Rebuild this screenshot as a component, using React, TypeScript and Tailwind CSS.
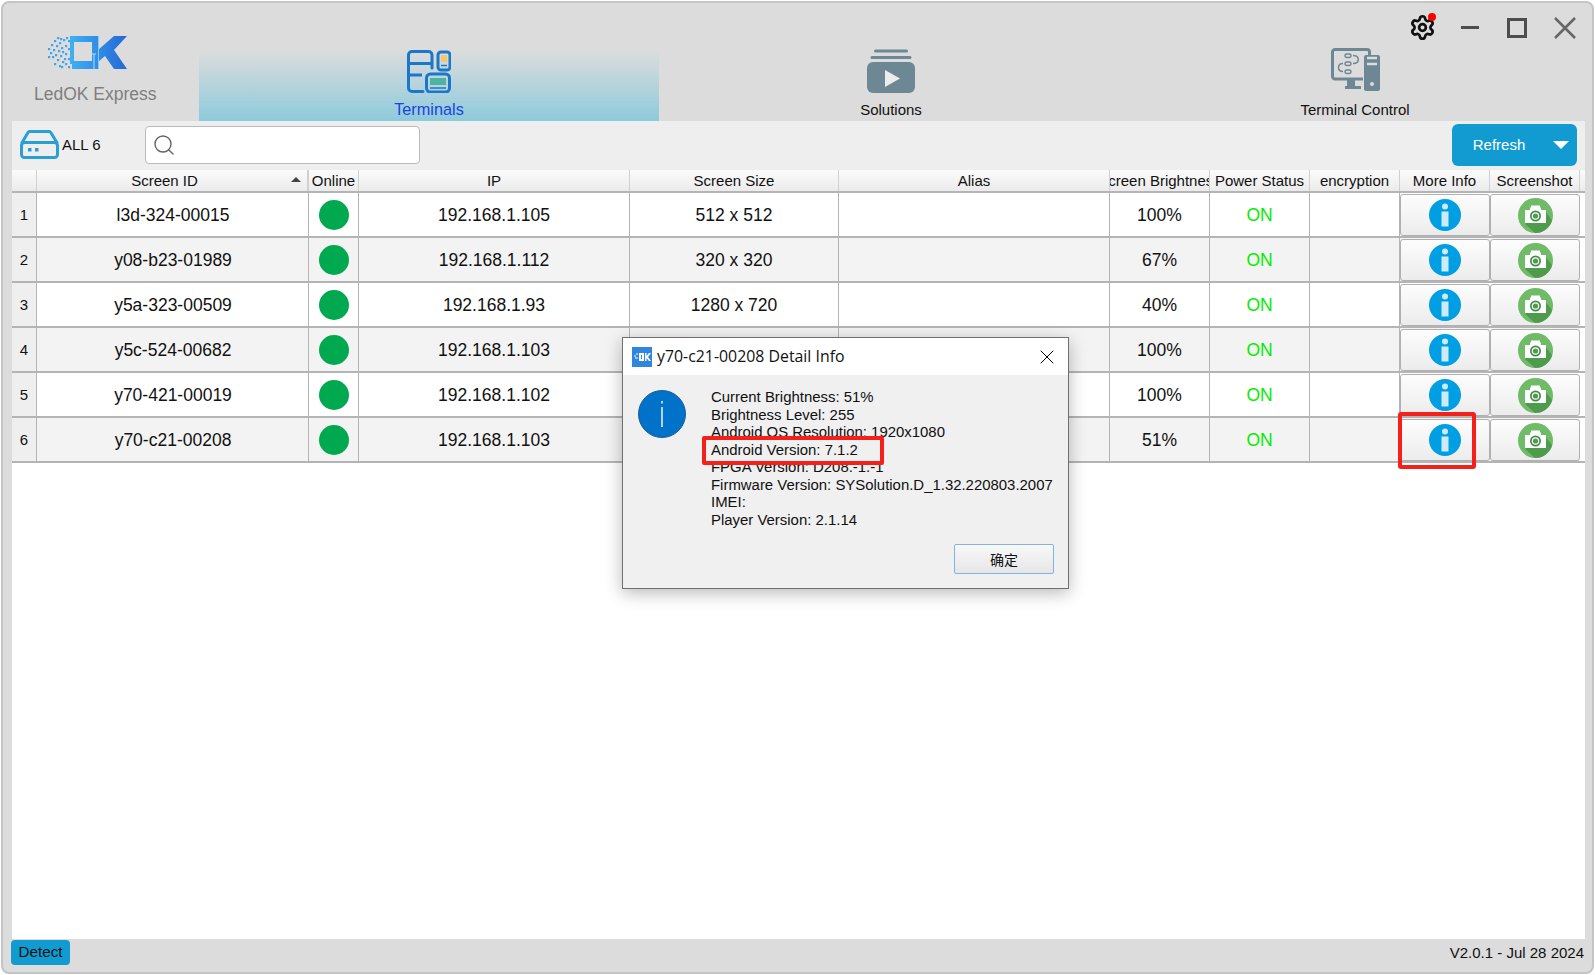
import { Search, Settings, X } from "lucide-react";

const rows = [
  { id: "l3d-324-00015", ip: "192.168.1.105", size: "512 x 512", brightness: "100%" },
  { id: "y08-b23-01989", ip: "192.168.1.112", size: "320 x 320", brightness: "67%" },
  { id: "y5a-323-00509", ip: "192.168.1.93", size: "1280 x 720", brightness: "40%" },
  { id: "y5c-524-00682", ip: "192.168.1.103", size: "", brightness: "100%" },
  { id: "y70-421-00019", ip: "192.168.1.102", size: "", brightness: "100%" },
  { id: "y70-c21-00208", ip: "192.168.1.103", size: "", brightness: "51%" },
];

const details = [
  "Current Brightness: 51%",
  "Brightness Level: 255",
  "Android OS Resolution: 1920x1080",
  "Android Version: 7.1.2",
  "FPGA Version: D208.-1.-1",
  "Firmware Version: SYSolution.D_1.32.220803.2007",
  "IMEI:",
  "Player Version: 2.1.14",
];

const headers = ["Online", "IP", "Screen Size", "Alias", "Screen Brightness", "Power Status", "encryption", "More Info", "Screenshot"];

const gridCols = "grid grid-cols-[25px_272px_50px_271px_209px_271px_100px_100px_90px_90px_90px_1fr]";

function Logo() {
  const bits = [
    [0, 12], [3, 8], [6, 4], [9, 1], [2, 16], [5, 13], [8, 9], [11, 6], [4, 20], [7, 18], [10, 14], [13, 11],
    [6, 27], [9, 23], [12, 19], [14, 25], [11, 29], [15, 3], [14, 15], [0, 20], [17, 9], [17, 17], [17, 27], [13, 30],
    [20, 4], [20, 12], [20, 22], [20, 30], [16, 22], [12, 2], [18, 1],
  ];
  return (
    <svg width="80" height="34" viewBox="0 0 80 34">
      <defs>
        <linearGradient id="logoBlue" x1="0" x2="1" y1="0" y2="0">
          <stop offset="0" stopColor="#3fb0f4" />
          <stop offset="1" stopColor="#2468d6" />
        </linearGradient>
      </defs>
      {bits.map(([x, y]) => (
        <rect key={`${x}-${y}`} x={x} y={y} width="2.2" height="2.2" fill="#3ca6ee" />
      ))}
      <path
        fill="url(#logoBlue)"
        fillRule="evenodd"
        d="M22 0H50V14L66 0H79L66 14L79 33H66L57 20L50 26V33H24V28H22ZM26 6V25H44V6Z"
      />
      <rect x="50" y="0" width="1" height="33" fill="#8cc8f5" />
      <path d="M43 18H48M46 18V33" stroke="#b5dcf8" strokeWidth="1" fill="none" />
    </svg>
  );
}

function TerminalsIcon() {
  return (
    <svg width="44" height="43" viewBox="0 0 44 43" fill="none" stroke="#1a77c9" strokeWidth="3">
      <path d="M25 18V5a3.500 3.500 0 0 0-3.500-3.500H5A3.500 3.500 0 0 0 1.500 5v33A3.500 3.500 0 0 0 5 41.500h11" strokeLinecap="round" />
      <path d="M2 13.500h23M2 25h13" />
      <rect x="31" y="2" width="12" height="18" rx="3" />
      <rect x="34" y="5" width="6" height="7" fill="#f9c76b" stroke="none" />
      <path d="M34 15.500h6" strokeWidth="1.500" />
      <rect x="19.500" y="24" width="23" height="18" rx="4" />
      <rect x="23" y="28" width="16" height="7" fill="#4fb3a3" stroke="none" />
      <path d="M23 38h16" strokeWidth="1.500" />
    </svg>
  );
}

function SolutionsIcon() {
  return (
    <svg width="48" height="44" viewBox="0 0 48 44" className="-mt-px mb-px">
      <path d="M8.500 2H39.500M5 8.500H43" stroke="#6e8794" strokeWidth="3" strokeLinecap="round" />
      <rect x="0" y="13" width="48" height="31" rx="6" fill="#6e8794" />
      <path d="M18 21L33 29.500L18 38Z" fill="#ececec" />
    </svg>
  );
}

function ControlIcon() {
  return (
    <svg width="49" height="43" viewBox="0 0 49 43" fill="none" className="-mt-[2px] mb-[2px]">
      <path d="M32 31H4a2.500 2.500 0 0 1-2.500-2.500V4A2.500 2.500 0 0 1 4 1.500h32A2.500 2.500 0 0 1 38.500 4v3" stroke="#6e8794" strokeWidth="3" />
      <path d="M16 32h8v6h6v3H14v-3h2Z" fill="#6e8794" />
      <rect x="33" y="7" width="16" height="36" rx="2" fill="#6e8794" />
      <path d="M36 10h10M36 16h10" stroke="#dcdcdc" strokeWidth="2.500" />
      <circle cx="41" cy="36" r="2" fill="#dcdcdc" />
      <g stroke="#6e8794" strokeWidth="1.500">
        <rect x="14" y="6" width="6" height="3.500" rx="1.700" />
        <rect x="14" y="14" width="6" height="3.500" rx="1.700" />
        <rect x="14" y="22" width="6" height="3.500" rx="1.700" />
        <path d="M22 7.500c7 0 7 8 0 8M12 15.500c-6 0-6 8 0 8" />
      </g>
    </svg>
  );
}

function DriveIcon() {
  return (
    <svg width="39" height="29" viewBox="0 0 39 29" fill="none" stroke="#2a9fd6" strokeWidth="3">
      <path d="M1.500 13.500L8 2.500a2 2 0 0 1 1.800-1H29a2 2 0 0 1 1.800 1l6.700 11" />
      <rect x="1.500" y="12.500" width="36" height="15" rx="3" />
      <rect x="8" y="18" width="3.500" height="3.500" fill="#2a9fd6" stroke="none" />
      <rect x="15" y="18" width="3.500" height="3.500" fill="#2a9fd6" stroke="none" />
    </svg>
  );
}

function InfoIcon() {
  return (
    <svg width="32" height="32" viewBox="0 0 32 32">
      <circle cx="16" cy="16" r="16" fill="#009fe3" />
      <circle cx="16" cy="7.500" r="3" fill="#cdeaf8" />
      <rect x="12.500" y="12.500" width="7" height="15" fill="#cdeaf8" />
    </svg>
  );
}

function CameraIcon() {
  return (
    <svg width="35" height="35" viewBox="0 0 35 35">
      <circle cx="17.500" cy="17.500" r="17.500" fill="#6fbb68" />
      <path d="M7 26L26 12L34 22A17.500 17.500 0 0 1 17 35Z" fill="#4f9b4d" />
      <path d="M7 12H12V9.500H23V12H28V25H7Z" fill="#ffffff" />
      <rect x="13" y="7.500" width="9" height="2.500" fill="#ffffff" />
      <circle cx="17.500" cy="18" r="5.500" fill="#3f8c45" />
      <circle cx="17.500" cy="18" r="3.800" fill="#ffffff" />
      <circle cx="17.500" cy="18" r="2.600" fill="#4f9b4d" />
    </svg>
  );
}

function DetailDialog() {
  return (
    <div className="absolute left-[622px] top-[337px] w-[447px] h-[252px] border border-[#707070] bg-[#f0f0f0] shadow-[0_4px_16px_rgba(0,0,0,0.28)]">
      <div className="h-[37px] bg-white flex items-center pl-[9px] pr-[9px]">
        <svg width="20" height="20" viewBox="0 0 20 20">
          <rect width="20" height="20" fill="#2f86e0" />
          <path d="M7 6h5v8H7ZM9 8v4h1V8ZM13 6h1.500v3L17 6h2l-3 4 3 4h-2l-2.500-3v3H13Z" fill="#ffffff" fillRule="evenodd" />
          <path d="M2 9h2M3 11h3M4 7h2" stroke="#ffffff" strokeWidth="1" />
        </svg>
        <span className="ml-[5px] text-[15.86px] text-[#111] [font-family:'Open_Sans','Noto_Sans',sans-serif]">y70-c21-00208 Detail Info</span>
        <X size={24} strokeWidth={1} className="ml-auto text-black" />
      </div>
      <div className="flex pt-[13px]">
        <div className="w-[88px] pl-[15px] pt-[2px] shrink-0">
          <svg width="48" height="48" viewBox="0 0 48 48">
            <circle cx="24" cy="24" r="23.500" fill="#0072c9" stroke="#1c5f98" strokeWidth="1" />
            <rect x="23.300" y="11" width="1.400" height="2.500" fill="#ffffff" />
            <rect x="23.300" y="17" width="1.400" height="20" fill="#ffffff" />
          </svg>
        </div>
        <div className="text-[14.93px] leading-[17.500px] text-[#111]">
          {details.map((line) =>
            line.startsWith("Android Version") ? (
              <div key={line} className="relative">
                <span className="absolute -left-[9px] -top-[5px] w-[182px] h-[29px] border-4 border-[#f5201a] rounded-[2px] bg-[#f0f0f0]" />
                <span className="relative">{line}</span>
              </div>
            ) : (
              <div key={line}>{line}</div>
            ),
          )}
        </div>
      </div>
      <div className="flex justify-end mt-[16px] pr-[14px]">
        <button className="w-[100px] h-[30px] border border-[#7eb4ea] rounded-[2px] bg-gradient-to-b from-[#f8f8f8] to-[#e6e6e6] text-[14px] text-[#111] [font-family:'Noto_Sans_CJK_SC',sans-serif]">
          确定
        </button>
      </div>
    </div>
  );
}

export default function App() {
  return (
    <div className="relative w-[1595px] h-[975px] p-px bg-white overflow-hidden [font-family:'Liberation_Sans',Arial,sans-serif]">
      <div className="w-full h-full flex flex-col bg-[#dcdcdc] border-2 border-[#c4c4c4] rounded-[8px] overflow-hidden">
        {/* Header */}
        <header className="h-[118px] flex shrink-0">
          <div className="w-[196px] pl-[31px] pt-[33px] shrink-0">
            <div className="ml-[14px]">
              <Logo />
            </div>
            <div className="mt-[14px] text-[17.5px] leading-[20px] text-[#7f7f7f] whitespace-nowrap">LedOK Express</div>
          </div>
          <div className="flex-1 flex flex-col">
            <div className="h-[47px] flex items-start justify-end">
              <div className="relative mt-[11px] mr-[25px]">
                <Settings size={27} strokeWidth={2.4} className="text-[#111]" />
                <span className="absolute right-0 top-[-1px] w-[8px] h-[8px] rounded-full bg-[#ff0000]" />
              </div>
              <span className="mt-[23px] w-[18px] h-[3px] bg-[#4d4d4d] mr-[28px]" />
              <span className="mt-[15px] w-[20px] h-[20px] border-[3px] border-[#4d4d4d] mr-[27px]" />
              <svg width="22" height="22" viewBox="0 0 22 22" className="mt-[14px] mr-[16px]">
                <path d="M1 1L21 21M21 1L1 21" stroke="#666666" strokeWidth="2.500" />
              </svg>
            </div>
            <nav className="h-[71px] grid grid-cols-[460px_464px_464px] w-[1388px]">
              <div className="flex flex-col items-center bg-gradient-to-b from-[#dcdcdc] to-[#8ccadc]">
                <TerminalsIcon />
                <span className="mt-[8px] text-[16.3px] leading-[17px] text-[#1a44e0]">Terminals</span>
              </div>
              <div className="flex flex-col items-center">
                <SolutionsIcon />
                <span className="mt-[7px] text-[15px] leading-[17px] text-[#111]">Solutions</span>
              </div>
              <div className="flex flex-col items-center">
                <ControlIcon />
                <span className="mt-[8px] text-[15px] leading-[17px] text-[#111]">Terminal Control</span>
              </div>
            </nav>
          </div>
        </header>

        {/* Content */}
        <main className="flex-1 ml-[9px] mr-[7px] bg-white flex flex-col">
          <div className="h-[49px] bg-[#eeeeee] flex items-center pl-[8px] pr-[8px] pb-[2px] shrink-0">
            <DriveIcon />
            <span className="ml-[3px] pt-[2px] w-[83px] text-[15px] text-[#111]">ALL 6</span>
            <div className="w-[275px] h-[38px] bg-white border border-[#bbbbbb] rounded-[4px] flex items-center pl-[6px]">
              <Search size={24} strokeWidth={1.4} className="text-[#666]" />
            </div>
            <button className="ml-auto w-[125px] h-[42px] rounded-[6px] bg-[#129bd1] flex items-center text-white text-[15px]">
              <span className="w-[94px] pt-[2px] text-center">Refresh</span>
              <span className="ml-[7px] w-0 h-0 border-x-[8px] border-x-transparent border-t-[8px] border-t-white" />
            </button>
          </div>

          <div className={`${gridCols} h-[23px] bg-gradient-to-b from-[#fbfbfb] to-[#ebebeb] border-b-2 border-[#b4b4b4] text-[15px] leading-[21px] text-[#111] shrink-0`}>
            <div className="border-r border-[#d0d0d0]" />
            <div className="relative flex justify-center pr-[15px] border-r-2 border-[#d0d0d0]">
              Screen ID
              <span className="absolute right-[6px] top-[7px] w-0 h-0 border-x-[5px] border-x-transparent border-b-[5px] border-b-[#444]" />
            </div>
            {headers.map((h) => (
              <div key={h} className="flex justify-center overflow-hidden whitespace-nowrap border-r border-[#d0d0d0] last:border-r-0">
                {h}
              </div>
            ))}
            <div />
          </div>

          {rows.map((r, i) => (
            <div key={r.id} className={`${gridCols} h-[45px] border-b-2 border-[#b4b4b4] text-[17.5px] text-[#111] shrink-0 ${i % 2 === 1 ? "bg-[#f3f3f3]" : "bg-white"}`}>
              <div className="bg-[#efefef] border-r border-[#b4b4b4] flex items-center justify-center pt-[2px] text-[15px]">{i + 1}</div>
              <div className="border-r border-[#b4b4b4] flex items-center justify-center pt-[2px] pl-px">{r.id}</div>
              <div className="border-r border-[#b4b4b4] flex items-center justify-center">
                <span className="w-[30px] h-[30px] rounded-full bg-[#00a94f]" />
              </div>
              <div className="border-r border-[#b4b4b4] flex items-center justify-center pt-[2px]">{r.ip}</div>
              <div className="border-r border-[#b4b4b4] flex items-center justify-center pt-[2px]">{r.size}</div>
              <div className="border-r border-[#b4b4b4]" />
              <div className="border-r border-[#b4b4b4] flex items-center justify-center pt-[2px]">{r.brightness}</div>
              <div className="border-r border-[#b4b4b4] flex items-center justify-center pt-[2px] text-[#00ee00]">ON</div>
              <div className="border-r border-[#b4b4b4]" />
              <div className="flex items-stretch pt-px">
                <button className="w-full border border-[#b0b0b0] rounded-[3px] bg-gradient-to-b from-[#fdfdfd] to-[#ececec] flex items-center justify-center">
                  <InfoIcon />
                </button>
              </div>
              <div className="flex items-stretch pt-px">
                <button className="w-full border border-[#b0b0b0] rounded-[3px] bg-gradient-to-b from-[#fdfdfd] to-[#ececec] flex items-center justify-center">
                  <CameraIcon />
                </button>
              </div>
              <div className="bg-white" />
            </div>
          ))}
        </main>

        {/* Status bar */}
        <footer className="h-[33px] ml-[8px] mr-[8px] flex items-start justify-between pt-px shrink-0">
          <span className="w-[59px] h-[25px] rounded-[4px] bg-[#129bd1] flex items-center justify-center text-[15.200px] text-[#111]">Detect</span>
          <span className="mt-[2px] text-[15px] text-[#111]">V2.0.1 - Jul 28 2024</span>
        </footer>
      </div>

      <DetailDialog />

      {/* Annotation around the More Info button */}
      <div className="absolute left-[1398px] top-[412px] w-[78px] h-[57px] border-4 border-[#f5201a] rounded-[3px]" />
    </div>
  );
}
